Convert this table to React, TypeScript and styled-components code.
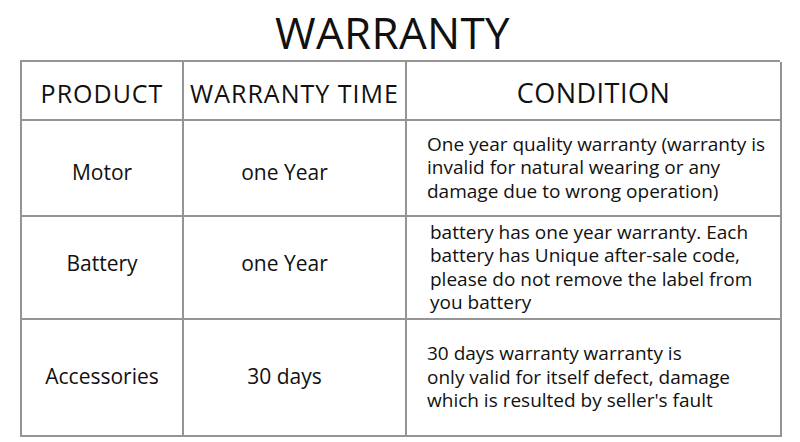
import styled, { createGlobalStyle } from "styled-components";

const GlobalStyle = createGlobalStyle`
  html, body {
    margin: 0;
    padding: 0;
    background: #ffffff;
  }
  body {
    font-family: "Open Sans", "Noto Sans", "DejaVu Sans", sans-serif;
    color: #111111;
  }
`;

type Row = {
  product: string;
  time: string;
  condition: string[];
  indent: number;
  offset: number;
};

const rows: Row[] = [
  {
    product: "Motor",
    time: "one Year",
    condition: [
      "One year quality warranty (warranty is",
      "invalid for natural wearing or any",
      "damage due to wrong operation)",
    ],
    indent: 20,
    offset: 4,
  },
  {
    product: "Battery",
    time: "one Year",
    condition: [
      "battery has one year warranty. Each",
      "battery has Unique after-sale code,",
      "please do not remove the label from",
      "you battery",
    ],
    indent: 23,
    offset: -5,
  },
  {
    product: "Accessories",
    time: "30 days",
    condition: [
      "30 days warranty warranty is",
      "only valid for itself defect, damage",
      "which is resulted by seller's fault",
    ],
    indent: 20,
    offset: -2,
  },
];

function App() {
  return (
    <Pagina>
      <GlobalStyle />
      <Titulo>WARRANTY</Titulo>
      <Tabela>
        <Cabecalho>PRODUCT</Cabecalho>
        <Cabecalho>WARRANTY TIME</Cabecalho>
        <Cabecalho $large>CONDITION</Cabecalho>
        {rows.map((row) => (
          <Linha key={row.product}>
            <Celula $offset={row.offset}>{row.product}</Celula>
            <Celula $offset={row.offset} $shift={10}>
              {row.time}
            </Celula>
            <Condicao $indent={row.indent}>
              {row.condition.map((line) => (
                <span key={line}>{line}</span>
              ))}
            </Condicao>
          </Linha>
        ))}
      </Tabela>
    </Pagina>
  );
}

const Pagina = styled.main`
  width: 800px;
  height: 442px;
  display: flex;
  flex-direction: column;
  align-items: center;
  overflow: hidden;
`;

const Titulo = styled.h1`
  margin: 0;
  height: 61px;
  display: flex;
  align-items: center;
  justify-content: center;
  font-size: 44px;
  font-weight: 400;
  letter-spacing: 0.3px;
  line-height: 1;
  padding: 2px 15px 0 0;
  box-sizing: border-box;
`;

const Tabela = styled.section`
  width: 760px;
  display: grid;
  grid-template-columns: 162px 223px 375px;
  grid-template-rows: 59px 96px 103px 117px;
  border-top: 2px solid #959595;
  border-left: 2px solid #959595;
  box-sizing: border-box;
  margin-top: -1px;
`;

const Linha = styled.div`
  display: contents;
`;

const Base = styled.div`
  border-right: 2px solid #959595;
  border-bottom: 2px solid #959595;
  display: flex;
  align-items: center;
  justify-content: center;
  white-space: nowrap;
`;

const Cabecalho = styled(Base)<{ $large?: boolean }>`
  font-size: ${(p) => (p.$large ? "27px" : "25px")};
  letter-spacing: ${(p) => (p.$large ? "0.5px" : "1px")};
  padding-top: 4px;
`;

const Celula = styled(Base)<{ $shift?: number; $offset: number }>`
  font-size: 21px;
  padding-right: ${(p) => (p.$shift ? p.$shift * 2 : 0)}px;
  padding-top: ${(p) => Math.max(p.$offset, 0) * 2}px;
  padding-bottom: ${(p) => Math.max(-p.$offset, 0) * 2}px;
`;

const Condicao = styled(Base)<{ $indent: number }>`
  flex-direction: column;
  align-items: flex-start;
  padding-left: ${(p) => p.$indent}px;
  font-size: 19px;
  line-height: 23.5px;
`;

export default App;
